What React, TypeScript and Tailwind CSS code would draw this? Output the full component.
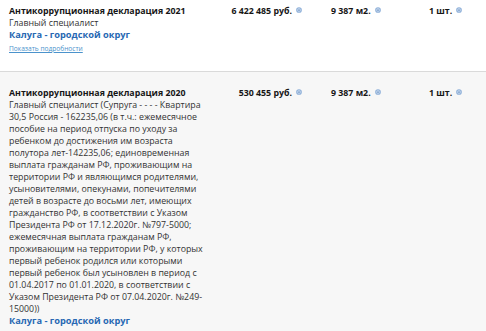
import React from "react";

const Hint = () => (
  <svg width="6" height="6" viewBox="0 0 8 8" className="inline-block ml-[4px] align-[1px]">
    <circle cx="4" cy="4" r="3.8" fill="#8fb0d9" />
    <circle cx="4" cy="4" r="2.3" fill="#cddcef" />
    <circle cx="4" cy="4.2" r="1.1" fill="#7096c6" />
  </svg>
);

type Row = {
  title: string;
  position: string;
  income: string;
  details?: boolean;
  bg: string;
  pad: string;
};

const rows: Row[] = [
  {
    title: "Антикоррупционная декларация 2021",
    position: "Главный специалист",
    income: "6 422 485 руб.",
    details: true,
    bg: "bg-white",
    pad: "pt-[6px] pb-[18px]",
  },
  {
    title: "Антикоррупционная декларация 2020",
    position:
      "Главный специалист (Супруга - - - - Квартира 30,5 Россия - 162235,06 (в т.ч.: ежемесячное пособие на период отпуска по уходу за ребенком до достижения им возраста полутора лет-142235,06; единовременная выплата гражданам РФ, проживающим на территории РФ и являющимся родителями, усыновителями, опекунами, попечителями детей в возрасте до восьми лет, имеющих гражданство РФ, в соответствии с Указом Президента РФ от 17.12.2020г. №797-5000; ежемесячная выплата гражданам РФ, проживающим на территории РФ, у которых первый ребенок родился или которыми первый ребенок был усыновлен в период с 01.04.2017 по 01.01.2020, в соответствии с Указом Президента РФ от 07.04.2020г. №249-15000))",
    income: "530 455 руб.",
    bg: "bg-[#f7f7f7]",
    pad: "pt-[16px] pb-4",
  },
];

export default function App() {
  return (
    <div className="w-[486px] h-[331px] overflow-hidden bg-white font-['Open_Sans',sans-serif] text-[#222]">
      {rows.map((r, i) => (
        <div
          key={i}
          className={`${r.bg} ${r.pad} pl-[9px] flex ${i > 0 ? "border-t border-[#dadada]" : ""}`}
        >
          <div className="w-[205px] shrink-0">
            <div className="text-[8.8px] leading-[11px] font-bold text-[#161616]">{r.title}</div>
            <div className="text-[8.8px] leading-[12px] text-[#333]">{r.position}</div>
            <div className="text-[9.25px] leading-[11px] font-bold text-[#2768b3]">
              Калуга - городской округ
            </div>
            {r.details && (
              <div className="mt-[4px] text-[6.6px] leading-[9px] text-[#4b93cc] underline">
                Показать подробности
              </div>
            )}
          </div>
          <div className="w-[88px] shrink-0 text-right text-[8.8px] leading-[11px] font-bold text-[#161616] whitespace-nowrap">
            {r.income}
            <Hint />
          </div>
          <div className="w-[127px] shrink-0 pl-[29px] text-[8.8px] leading-[11px] font-bold text-[#161616] whitespace-nowrap">
            9 387 м2.
            <Hint />
          </div>
          <div className="text-[8.8px] leading-[11px] font-bold text-[#161616] whitespace-nowrap">
            1 шт.
            <Hint />
          </div>
        </div>
      ))}
    </div>
  );
}
